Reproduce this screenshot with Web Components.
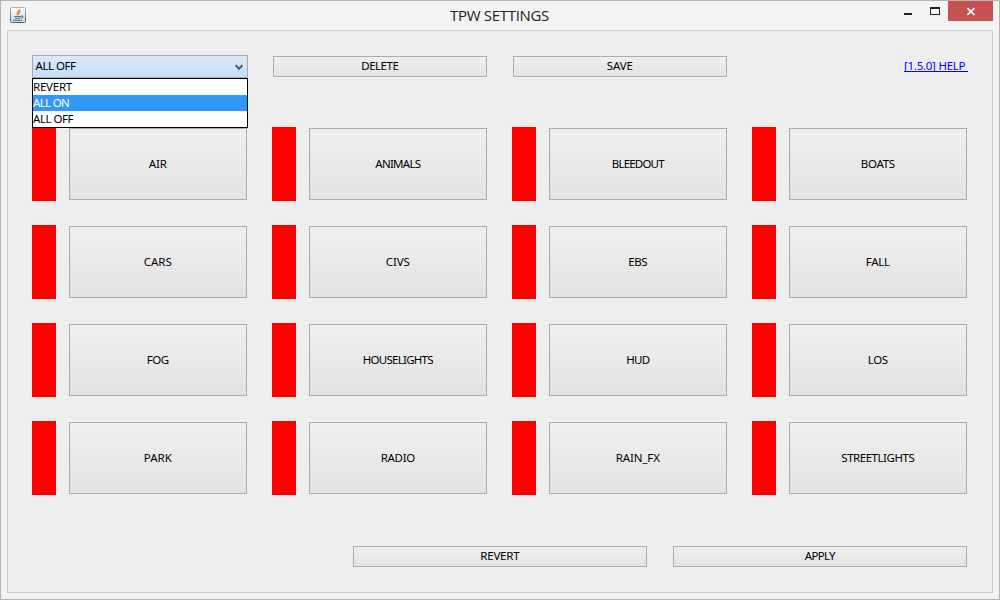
<!DOCTYPE html>
<html lang="en"><head><meta charset="utf-8"><title>TPW SETTINGS</title>
<style>html,body{margin:0;height:100%;overflow:hidden}</style></head>
<body><tpw-window></tpw-window>
<script>
const define = (name, html, after) => customElements.define(name, class extends HTMLElement {
  connectedCallback() {
    if (this.shadowRoot) return;
    this.attachShadow({mode:'open'}).innerHTML = html;
    if (after) after(this, this.shadowRoot);
  }
});

/* Label whose tracking is adjusted to a given width */
define('fit-text', `<style>:host{display:inline-block;white-space:pre}span{display:inline-block}</style><span><slot></slot></span>`, (el, root) => {
  const w = parseFloat(el.getAttribute('w')), s = root.querySelector('span');
  const d = (w - s.getBoundingClientRect().width) / el.textContent.length;
  s.style.letterSpacing = d.toFixed(3) + 'px';
});

define('tpw-button', `<style>
:host{display:block;box-sizing:border-box;height:21px}
button{all:unset;box-sizing:border-box;width:100%;height:100%;border:1px solid #acacac;background:linear-gradient(#efefef,#e3e3e3);display:flex;align-items:center;justify-content:center;color:#000;line-height:15px;padding:0 .4px var(--lift,2px) 0}
</style><button><slot></slot></button>`);

define('tpw-tile', `<style>
:host{display:grid;grid-template-columns:24px 178px;column-gap:13px;align-items:center;height:74px}
i{background:#f00;height:74px}tpw-button{height:72px;--lift:1px}
</style><i></i><tpw-button><slot></slot></tpw-button>`);

define('tpw-combo', `<style>
:host{display:block;position:relative;width:216px;height:23px}
.box{box-sizing:border-box;height:23px;border:1px solid #a6abb2;background:linear-gradient(#daeafa,#c3dffc);display:flex;align-items:center;justify-content:space-between;padding:0 4.5px 0 2.5px;line-height:15px}
.box fit-text{margin-bottom:2px}
.list{box-sizing:border-box;position:absolute;z-index:2;top:23px;left:0;width:216px;height:50px;border:1px solid #000;background:#fff}
.list div{height:16px;line-height:16px}
.on{background:#3297fd;color:#fff}
svg{display:block;margin-top:1px}
</style><div class="box"><fit-text w="40">ALL OFF</fit-text><svg width="8" height="7" viewBox="0 0 8 7"><path d="M.6 1.2 4 4.8 7.4 1.2" fill="none" stroke="#555b63" stroke-width="2"/></svg></div>
<div class="list"><div><fit-text w="39">REVERT</fit-text></div><div class="on"><fit-text w="36">ALL ON</fit-text></div><div><fit-text w="40">ALL OFF</fit-text></div></div>`);

define('tpw-titlebar', `<style>
:host{display:grid;grid-template-columns:1fr auto 1fr;height:29px;font:15px "Open Sans","Noto Sans",sans-serif;color:#222}
.icon{padding:6px 0 0 9px}
.title{line-height:28px;margin-right:1px}
.ctl{display:flex;justify-content:flex-end;padding-right:6px}
svg{display:block}
</style><div class="icon"><svg width="16" height="16" viewBox="0 0 16 16">
<defs><linearGradient id="g" x2="0" y2="1"><stop stop-color="#fff"/><stop offset="1" stop-color="#c9d3da"/></linearGradient><linearGradient id="b" x2="0" y2="1"><stop stop-color="#a9b7c1"/><stop offset="1" stop-color="#48677f"/></linearGradient></defs>
<rect x=".5" y=".5" width="15" height="15" rx="1" fill="url(#g)" stroke="url(#b)"/>
<path d="M9.8 2C10 4 6 5 7.2 7.2L8 8.2M10.8 4.3C8.5 5.3 8.4 6 9 7.7" fill="none" stroke="#e8791e" stroke-width="1.2"/>
<path d="M4 9.5H11M5 11.2H10.2M3 13.3H12M11 9C13.6 8.5 13.3 10.8 11 11.2" fill="none" stroke="#4b7897" stroke-width="1.1"/></svg></div>
<div class="title"><fit-text w="99">TPW SETTINGS</fit-text></div>
<div class="ctl"><svg width="89" height="20" viewBox="0 0 89 20" shape-rendering="crispEdges"><path d="M0 12h8v2H0z" fill="#222"/><path d="M26 6h10v8H26zM27 8v5h8V8z" fill="#222" fill-rule="evenodd"/><path d="M44 0h45v20H44z" fill="#c75050"/><path d="M63.4 7.2l7 6.6m0-6.6l-7 6.6" stroke="#fff" stroke-width="1.8" shape-rendering="auto"/></svg></div>`);

const tiles = [['AIR',18],['ANIMALS',45],['BLEEDOUT',52],['BOATS',34],['CARS',28],['CIVS',24],['EBS',19],['FALL',24],['FOG',22],['HOUSELIGHTS',70],['HUD',23],['LOS',20],['PARK',28],['RADIO',34],['RAIN_FX',44],['STREETLIGHTS',73]];

define('tpw-window', `<style>
:host{display:flex;flex-direction:column;box-sizing:border-box;width:1000px;height:600px;border:1px solid #b4b4b4;background:#f3f3f3;font:11.5px "Noto Sans","DejaVu Sans",sans-serif;color:#000}
main{box-sizing:border-box;width:986px;height:563px;margin-left:6px;border:1px solid #cdcdcd;background:#eee;padding:24px 24px 0}
.top{display:grid;grid-template-columns:216px 214px 214px 1fr;height:23px;align-items:center}
.b1{margin-left:25px;width:214px}.b2{margin-left:51px;width:214px}
a{justify-self:end;color:#00f;border-bottom:1px solid #00f;height:11px;line-height:11px;margin-bottom:2px}
.grid{display:grid;grid-template-columns:repeat(4,215px);column-gap:25px;row-gap:24px;margin-top:49px}
.bottom{display:flex;justify-content:flex-end;gap:26px;margin-top:51px;padding-right:1px}
.bottom tpw-button{width:294px}
</style><tpw-titlebar></tpw-titlebar><main>
<div class="top"><tpw-combo></tpw-combo><tpw-button class="b1"><fit-text w="37">DELETE</fit-text></tpw-button><tpw-button class="b2"><fit-text w="26">SAVE</fit-text></tpw-button><a><fit-text w="64">[1.5.0] HELP </fit-text></a></div>
<div class="grid">${tiles.map(([t,w])=>`<tpw-tile><fit-text w="${w}">${t}</fit-text></tpw-tile>`).join('')}</div>
<div class="bottom"><tpw-button><fit-text w="39">REVERT</fit-text></tpw-button><tpw-button><fit-text w="30">APPLY</fit-text></tpw-button></div>
</main>`);
</script></body></html>
